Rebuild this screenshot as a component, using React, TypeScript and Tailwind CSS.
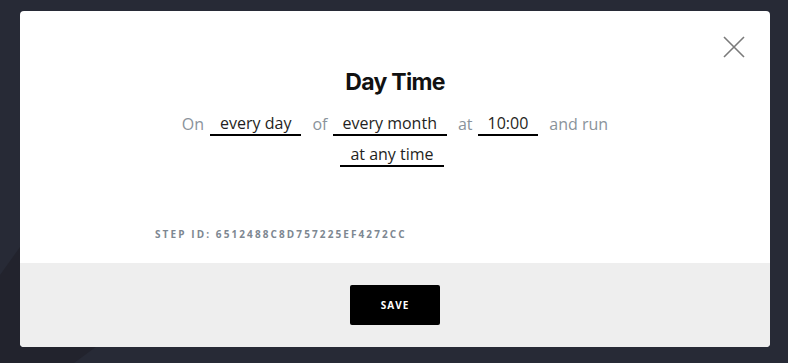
import React from "react";

const Word = ({ children, className = "" }: { children: React.ReactNode; className?: string }) => (
  <span className={`text-[#8a939b] leading-[24px] ${className}`}>{children}</span>
);

const Field = ({ children, className = "" }: { children: React.ReactNode; className?: string }) => (
  <span className={`inline-flex h-[24px] items-center border-b-2 border-black px-[10px] leading-[22px] text-[#1f1f22] ${className}`}>
    {children}
  </span>
);

export default function App() {
  return (
    <div className="relative h-[363px] w-[788px] overflow-hidden bg-[#272a36]" style={{ fontFamily: '"Open Sans", "Noto Sans", sans-serif' }}>
      <svg className="absolute inset-0" width="788" height="363" viewBox="0 0 788 363">
        <polygon points="0,275 25,240 160,300 74,363 0,363" fill="#22232d" />
      </svg>
      <div className="relative flex h-full flex-col px-[20px] pt-[11px] pb-[16px]">
        <div className="flex h-[336px] w-[750px] flex-col overflow-hidden rounded-[4px] bg-white">
          <div className="relative flex h-[252px] flex-col items-center pt-[57px]">
            <button className="absolute right-[25px] top-[25px] flex h-[22px] w-[22px] items-center justify-center" aria-label="Close">
              <svg width="22" height="22" viewBox="0 0 22 22" fill="none">
                <path d="M1 1 L21 21 M21 1 L1 21" stroke="#7a7a7a" strokeWidth="1.6" />
              </svg>
            </button>
            <h1
              className="text-[23px] font-bold leading-[28px] tracking-[-0.7px] text-[#111]"
              style={{ fontFamily: 'Inter, "Noto Sans", sans-serif' }}
            >
              Day Time
            </h1>
            <div className="mt-[16px] flex w-[460px] flex-wrap items-center justify-center gap-y-[7px] text-[16px]">
              <Word>On</Word>
              <Field className="ml-[6px]">every day</Field>
              <Word className="ml-[11px]">of</Word>
              <Field className="ml-[5px]">every month</Field>
              <Word className="ml-[11px]">at</Word>
              <Field className="ml-[5px]">10:00</Field>
              <Word className="ml-[11px]">and run</Word>
              <Field className="ml-[26px] mr-[32px]">at any time</Field>
            </div>
            <div className="mt-auto mb-[22px] w-full pl-[135px] leading-[13px]">
              <span className="text-[10px] font-bold leading-[13px] tracking-[2.1px] text-[#7d8791]">
                STEP ID: 6512488C8D757225EF4272CC
              </span>
            </div>
          </div>
          <div className="flex flex-1 items-center justify-center bg-[#eeeeee]">
            <button className="flex h-[40px] w-[90px] items-center justify-center rounded-[2px] bg-black text-[10px] font-bold tracking-[1px] text-white">
              SAVE
            </button>
          </div>
        </div>
      </div>
    </div>
  );
}
